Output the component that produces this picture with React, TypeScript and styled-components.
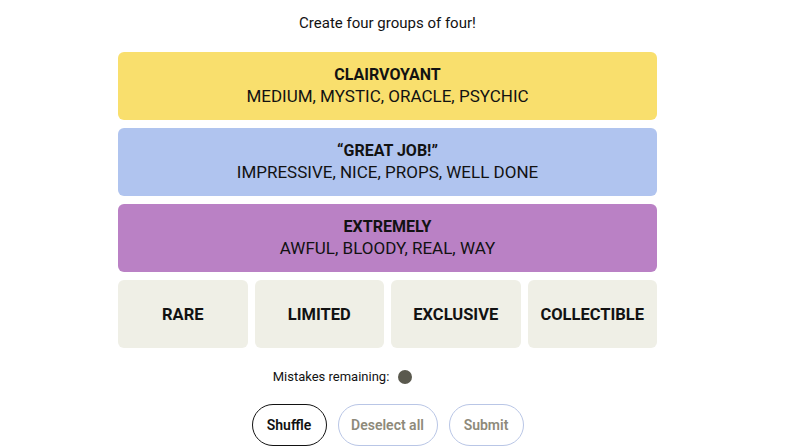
import React from 'react'
import styled, { createGlobalStyle } from 'styled-components'

const GlobalStyle = createGlobalStyle`
  html, body {
    margin: 0;
    padding: 0;
    background: #ffffff;
    font-family: Roboto, "Liberation Sans", sans-serif;
    color: #000000;
    overflow: hidden;
  }
`

const Page = styled.div`
  width: 800px;
  height: 448px;
  display: flex;
  flex-direction: column;
  align-items: center;
  padding-right: 25px;
  box-sizing: border-box;
`

const Intro = styled.p`
  margin: 13px 0 0;
  height: 20px;
  font-size: 15px;
  line-height: 20px;
  color: #121212;
`

const Board = styled.div`
  margin-top: 19px;
  width: 539px;
  display: flex;
  flex-direction: column;
  gap: 8px;
`

const Solved = styled.div<{ $bg: string }>`
  height: 68px;
  border-radius: 6px;
  background: ${(p) => p.$bg};
  display: flex;
  flex-direction: column;
  align-items: center;
  justify-content: center;
  text-transform: uppercase;
  color: #121212;
`

const GroupTitle = styled.div`
  font-weight: 700;
  font-size: 16px;
  line-height: 20px;
`

const GroupWords = styled.div`
  font-size: 17px;
  line-height: 23px;
`

const TileRow = styled.div`
  display: grid;
  grid-template-columns: repeat(4, 1fr);
  gap: 7px;
`

const Tile = styled.div`
  height: 68px;
  border-radius: 6px;
  background: #efefe6;
  display: flex;
  align-items: center;
  justify-content: center;
  font-weight: 700;
  font-size: 16.5px;
  text-transform: uppercase;
  color: #121212;
`

const Mistakes = styled.div`
  margin-top: 21px;
  display: flex;
  align-items: center;
  font-size: 13px;
  color: #121212;
`

const Dots = styled.div`
  margin-left: 9px;
  display: flex;
  gap: 16px;
`

const Dot = styled.span<{ $used?: boolean }>`
  width: 14px;
  height: 14px;
  border-radius: 50%;
  background: #5a594e;
  visibility: ${(p) => (p.$used ? 'hidden' : 'visible')};
`

const Controls = styled.div`
  margin-top: 20px;
  display: flex;
  gap: 11px;
`

const Pill = styled.button<{ $active?: boolean; $w: number }>`
  width: ${(p) => p.$w}px;
  height: 42px;
  padding: 0;
  white-space: nowrap;
  border-radius: 21px;
  background: #ffffff;
  border: 1px solid ${(p) => (p.$active ? '#121212' : '#b9c6e6')};
  color: ${(p) => (p.$active ? '#121212' : '#8e8a7a')};
  font-family: Roboto, "Liberation Sans", sans-serif;
  font-weight: 600;
  font-size: 14px;
`

const groups = [
  { title: 'Clairvoyant', words: 'Medium, Mystic, Oracle, Psychic', bg: '#f9df6d' },
  { title: '\u201cGreat job!\u201d', words: 'Impressive, Nice, Props, Well done', bg: '#b0c4ef' },
  { title: 'Extremely', words: 'Awful, Bloody, Real, Way', bg: '#ba81c5' },
]

const tiles = ['Rare', 'Limited', 'Exclusive', 'Collectible']

const App: React.FC = () => {
  return (
    <>
      <GlobalStyle />
      <Page>
        <Intro>Create four groups of four!</Intro>
        <Board>
          {groups.map((g) => (
            <Solved key={g.title} $bg={g.bg}>
              <GroupTitle>{g.title}</GroupTitle>
              <GroupWords>{g.words}</GroupWords>
            </Solved>
          ))}
          <TileRow>
            {tiles.map((t) => (
              <Tile key={t}>{t}</Tile>
            ))}
          </TileRow>
        </Board>
        <Mistakes>
          Mistakes remaining:
          <Dots>
            <Dot />
            <Dot $used />
            <Dot $used />
            <Dot $used />
          </Dots>
        </Mistakes>
        <Controls>
          <Pill $active $w={75}>Shuffle</Pill>
          <Pill $w={100}>Deselect all</Pill>
          <Pill $w={75}>Submit</Pill>
        </Controls>
      </Page>
    </>
  )
}

export default App
